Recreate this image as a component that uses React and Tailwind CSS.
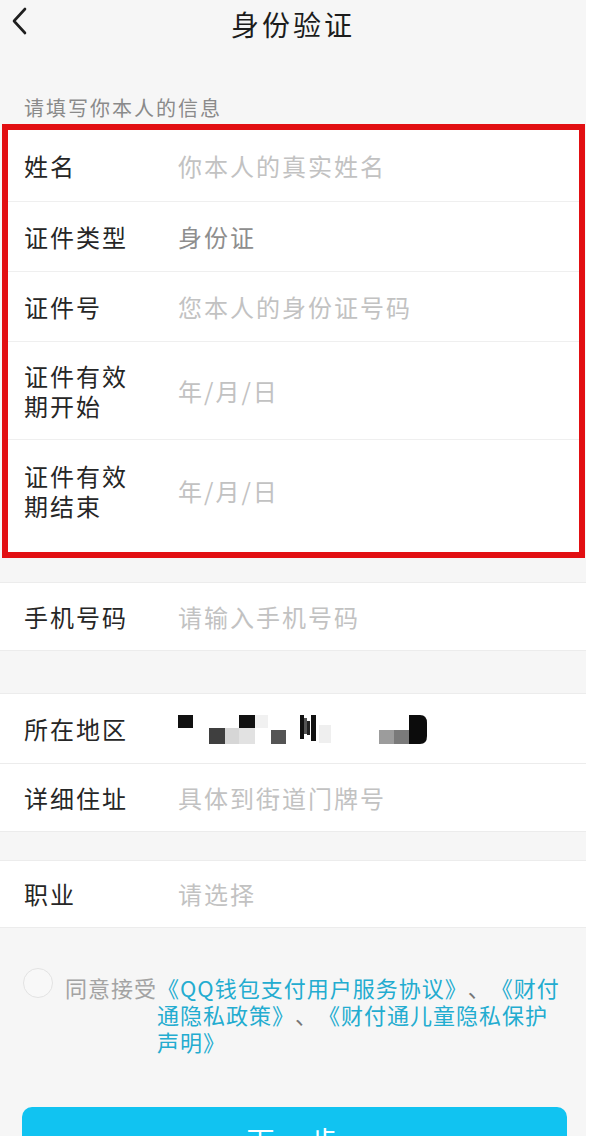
import React from "react";

const FONT = "font-['Noto_Sans_CJK_SC','Noto_Sans',sans-serif]";

function Row({ label, placeholder, h = "h-[70px]", inBox = false, children, className = "" }) {
  return (
    <div className={`flex items-center bg-white ${h} ${inBox ? "pl-[16px]" : "pl-[24px]"} ${className}`}>
      <div className="w-[154px] shrink-0 text-[24px] leading-[30px] tracking-[2px] text-[#262626]">
        {label}
      </div>
      {children ? (
        children
      ) : (
        <div className="text-[24px] tracking-[2px] text-[#c2c2c2]">{placeholder}</div>
      )}
    </div>
  );
}

function Mosaic() {
  return (
    <svg width="250" height="30" viewBox="0 0 250 30" className="mt-[2px]">
      <rect x="0" y="0" width="15" height="13" fill="#111" />
      <rect x="31" y="13" width="16" height="16" fill="#3f3f3f" />
      <rect x="47" y="13" width="14" height="16" fill="#d6d6d6" />
      <rect x="61" y="13" width="16" height="16" fill="#e2e2e2" />
      <rect x="61" y="0" width="16" height="13" fill="#111" />
      <rect x="77" y="0" width="13" height="13" fill="#f1f1f1" />
      <rect x="93" y="15" width="15" height="14" fill="#545454" />
      <rect x="122" y="0" width="4" height="24" fill="#111" />
      <rect x="126" y="3" width="3" height="16" fill="#555" />
      <rect x="129" y="6" width="3" height="14" fill="#222" />
      <rect x="133" y="0" width="5" height="26" fill="#111" />
      <rect x="141" y="10" width="12" height="18" fill="#efefef" />
      <rect x="201" y="15" width="15" height="14" fill="#9c9c9c" />
      <rect x="216" y="15" width="15" height="14" fill="#7a7a7a" />
      <path d="M231 0 H242 Q249 0 249 8 V21 Q249 29 242 29 H231 Z" fill="#0c0c0c" />
    </svg>
  );
}

export default function App() {
  return (
    <div className={`flex w-[612px] min-h-[1136px] bg-white ${FONT}`}>
      <div className="w-[586px] bg-[#f6f6f6] flex flex-col">
        {/* header */}
        <div className="flex h-[48px]">
          <div className="w-[80px] pl-[11px] pt-[7px]">
            <svg width="16" height="28" viewBox="0 0 16 28" fill="none">
              <path d="M14 2 L3 14 L14 26" stroke="#1f1f1f" strokeWidth="2.6" strokeLinecap="round" strokeLinejoin="round" />
            </svg>
          </div>
          <div className="flex-1 flex items-center justify-center text-[28px] tracking-[3px] text-[#1c1c1c]">
            身份验证
          </div>
          <div className="w-[80px]" />
        </div>

        <div className="pt-[48px] pb-[4px] pl-[24px] text-[20px] leading-[24px] tracking-[2px] text-[#8a8a8a]">
          请填写你本人的信息
        </div>

        {/* highlighted group */}
        <div className="ml-[2px] w-[583px] border-[6px] border-[#e20f12] bg-white">
          <Row inBox h="h-[72px]" label="姓名" placeholder="你本人的真实姓名" className="border-b border-[#efefef]" />
          <Row inBox label="证件类型" className="border-b border-[#efefef]">
            <div className="text-[24px] tracking-[2px] text-[#8e8e8e]">身份证</div>
          </Row>
          <Row inBox label="证件号" placeholder="您本人的身份证号码" className="border-b border-[#efefef]" />
          <Row inBox h="h-[98px]" label={<>证件有效<br />期开始</>} placeholder="年/月/日" className="border-b border-[#efefef]" />
          <Row inBox h="h-[102px]" label={<>证件有效<br />期结束</>} placeholder="年/月/日" />
          <div className="h-[10px]" />
        </div>

        <div className="h-[24px]" />
        <Row h="h-[69px]" label="手机号码" placeholder="请输入手机号码" className="border-y border-[#ececec]" />
        <div className="h-[42px]" />
        <Row label="所在地区" className="border-t border-[#ececec]">
          <Mosaic />
        </Row>
        <Row h="h-[69px]" label="详细住址" placeholder="具体到街道门牌号" className="border-y border-[#ececec]" />
        <div className="h-[28px]" />
        <Row h="h-[68px]" label="职业" placeholder="请选择" className="border-y border-[#ececec]" />

        {/* agreement */}
        <div className="flex items-start pt-[40px] pl-[23px] [text-spacing-trim:space-all]">
          <div className="w-[30px] h-[30px] shrink-0 rounded-full border-[1.5px] border-[#e3e3e3] bg-[#f8f8f8]" />
          <div className="mt-[6px] ml-[12px] shrink-0 text-[22px] leading-[27px] tracking-[1px] text-[#a3a3a3]">
            同意接受
          </div>
          <p className="mt-[6px] w-[408px] text-[22px] leading-[27px] tracking-[1px] text-[#23acd0] [text-spacing-trim:space-all]">
            《QQ钱包支付用户服务协议》<span className="text-[#777]">、</span>《财付通隐私政策》<span className="text-[#777]">、</span>《财付通儿童隐私保护声明》
          </p>
        </div>

        <button className="mt-[52px] ml-[22px] w-[545px] h-[66px] shrink-0 rounded-[10px] bg-[#11c3f1] text-white text-[28px] tracking-[4px]">
          下一步
        </button>
      </div>
    </div>
  );
}
